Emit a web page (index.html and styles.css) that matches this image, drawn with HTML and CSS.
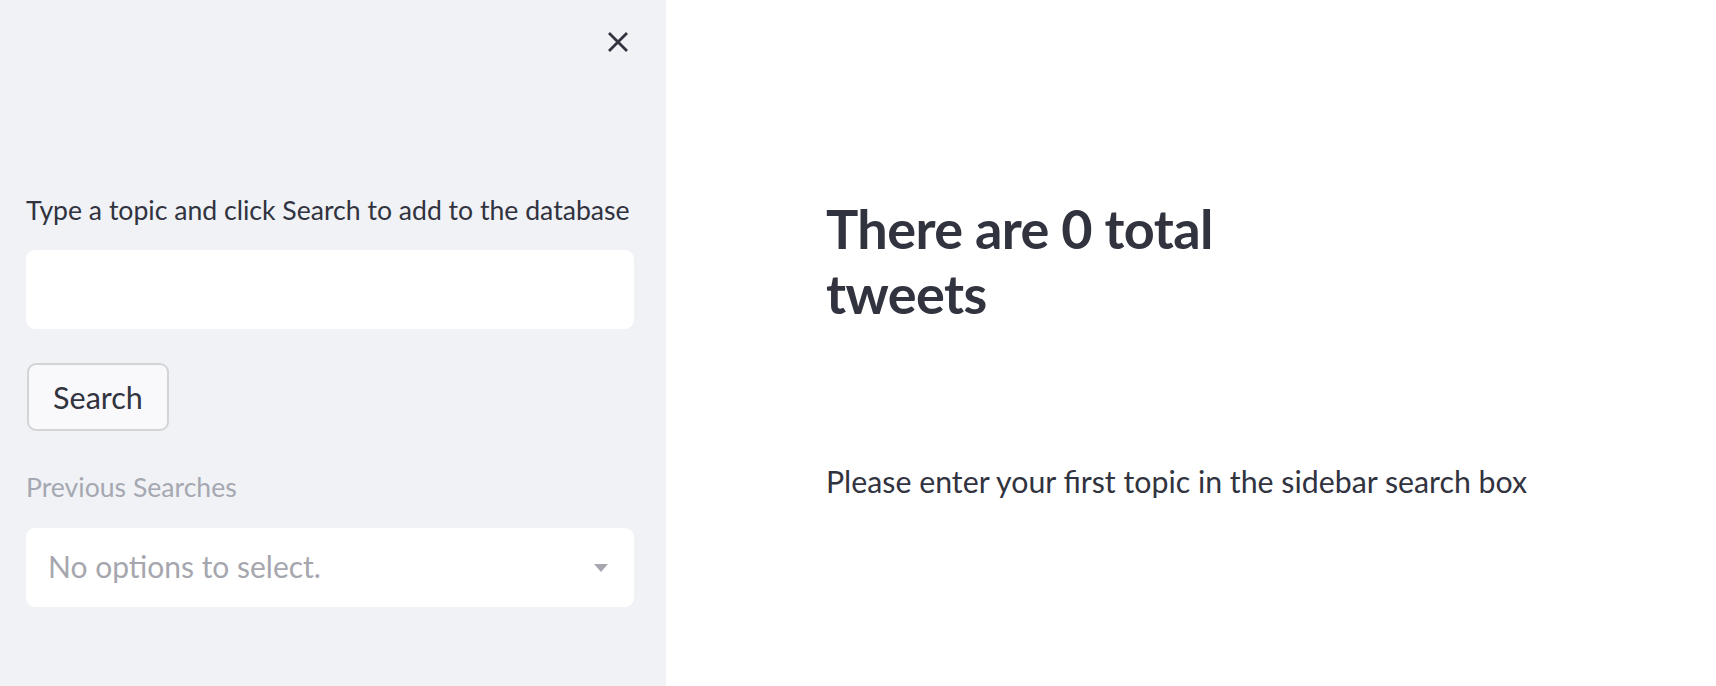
FILE: index.html
```html
<!DOCTYPE html>
<html lang="en">
<head>
<meta charset="utf-8">
<title>Tweets</title>
<link rel="stylesheet" href="styles.css">
</head>
<body>
<div class="app">
  <aside class="sidebar">
    <div class="sidebar-top">
      <button class="close-btn" aria-label="Close sidebar">
        <svg width="22" height="22" viewBox="0 0 22 22"><path d="M2 2 L20 20 M20 2 L2 20" stroke="#31333f" stroke-width="2.8" stroke-linecap="butt" fill="none"/></svg>
      </button>
    </div>
    <div class="sidebar-content">
      <label class="field-label">Type a topic and click Search to add to the database</label>
      <div class="text-input"></div>
      <button class="search-btn">Search</button>
      <label class="field-label disabled">Previous Searches</label>
      <div class="select-box">
        <span class="placeholder">No options to select.</span>
        <svg class="caret" width="14" height="8" viewBox="0 0 14 8"><path d="M0 0 H14 L7 8 Z" fill="#a6a7ae"/></svg>
      </div>
    </div>
  </aside>
  <main class="main">
    <div class="main-col">
      <h2 class="title">There are 0 total tweets</h2>
      <p class="message">Please enter your first topic in the sidebar search box</p>
    </div>
  </main>
</div>
</body>
</html>
```

FILE: styles.css
```css
html, body {
  margin: 0;
  padding: 0;
  height: 100%;
}
body {
  font-family: Lato, "Noto Sans", sans-serif;
  color: #31333f;
  background: #ffffff;
}
.app {
  display: flex;
  height: 686px;
}
.sidebar {
  width: 666px;
  flex: 0 0 666px;
  background: #f0f2f6;
  display: flex;
  flex-direction: column;
}
.sidebar-top {
  display: flex;
  justify-content: flex-end;
  padding: 31px 37px 0 0;
  height: 22px;
}
.close-btn {
  border: none;
  background: transparent;
  padding: 0;
  width: 22px;
  height: 22px;
  display: block;
}
.close-btn svg { display: block; }
.sidebar-content {
  padding: 0 32px 0 26px;
  display: flex;
  flex-direction: column;
  align-items: flex-start;
  margin-top: 139px;
}
.field-label {
  font-size: 26.6px;
  line-height: 36px;
  height: 36px;
  display: block;
  padding-left: 0;
}
.field-label.disabled {
  color: #a6a8b1;
  margin-top: 38px;
}
.text-input {
  margin-top: 22px;
  width: 608px;
  height: 79px;
  background: #ffffff;
  border-radius: 9px;
}
.search-btn {
  margin-top: 34px;
  margin-left: 1px;
  width: 142px;
  height: 68px;
  border: 2px solid #d3d4d8;
  border-radius: 9px;
  background: #f9f9fb;
  font-family: inherit;
  font-size: 30.5px;
  color: #31333f;
  padding: 0;
}
.select-box {
  margin-top: 23px;
  width: 608px;
  height: 79px;
  background: #ffffff;
  border-radius: 9px;
  display: flex;
  align-items: center;
  justify-content: space-between;
  padding: 0 26px 0 22px;
  box-sizing: border-box;
}
.placeholder {
  font-size: 30px;
  color: #a6a7ae;
  padding-bottom: 4px;
}
.caret { display: block; }
.main {
  flex: 1;
  padding-left: 160px;
}
.main-col {
  width: 460px;
}
.title {
  font-size: 54px;
  font-weight: 700;
  line-height: 65px;
  margin: 196px 0 0 0;
  letter-spacing: -0.6px;
}
.message {
  font-size: 30.3px;
  line-height: 40px;
  margin: 135px 0 0 0;
  white-space: nowrap;
}
```
